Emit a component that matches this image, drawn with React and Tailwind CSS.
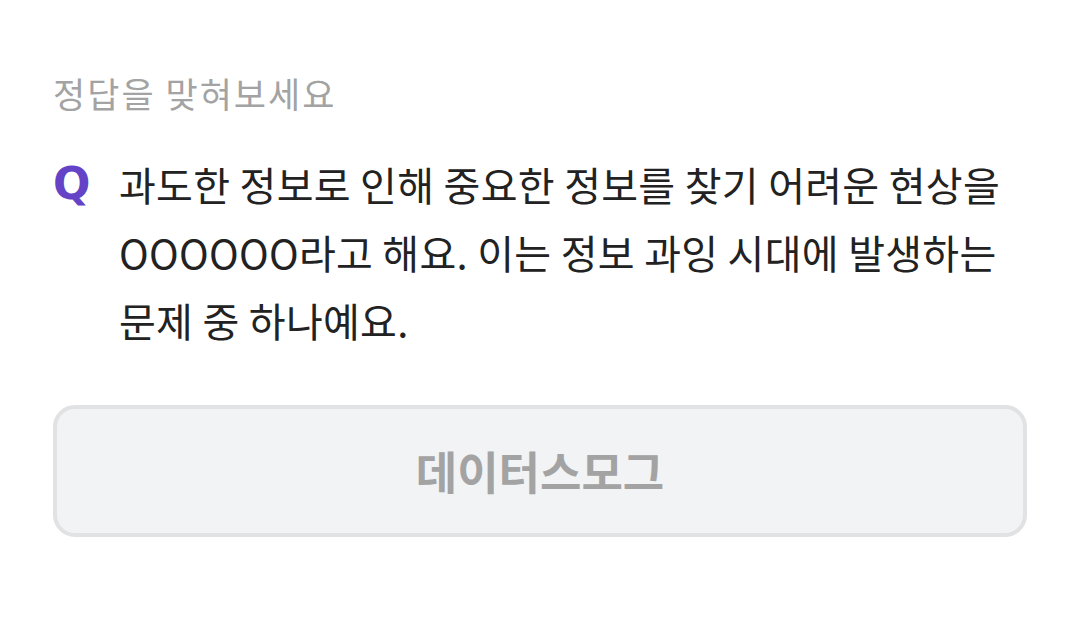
import React from 'react';

export default function App() {
    const font = { fontFamily: '"Noto Sans CJK KR", "Noto Sans", sans-serif' };

    return (
        <div className="min-h-[620px] w-[1080px] bg-white px-[53px] pt-[73px]" style={font}>
            <p className="text-[35px] leading-[40px] text-[#a3a3a3] tracking-[2px]">정답을 맞혀보세요</p>

            <div className="mt-[37px] flex">
                <span className="w-[66px] shrink-0 font-['DejaVu_Sans',sans-serif] text-[44px] font-bold leading-[68px] text-[#6543c7]">
                    Q
                </span>
                <p className="text-[40px] leading-[68px] text-[#222222] tracking-[0.3px]">
                    과도한 정보로 인해 중요한 정보를 찾기 어려운 현상을 OOOOOO라고 해요. 이는 정보 과잉 시대에 발생하는 문제 중 하나예요.
                </p>
            </div>

            <div className="mt-[51px] flex h-[132px] w-[974px] items-center justify-center rounded-[22px] border-4 border-[#e1e2e4] bg-[#f2f3f5]">
                <span className="text-[45px] font-bold text-[#a3a3a3]">데이터스모그</span>
            </div>
        </div>
    );
}
